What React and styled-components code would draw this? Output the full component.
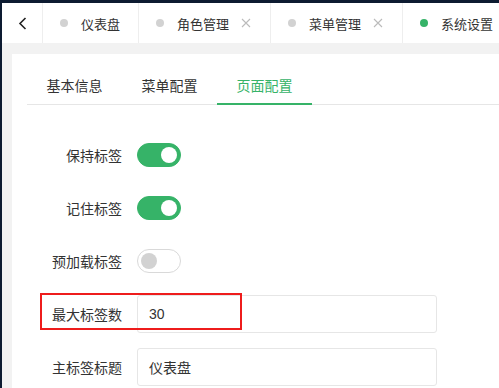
import styled, { createGlobalStyle } from "styled-components"

const GlobalStyle = createGlobalStyle`
  html, body {
    margin: 0;
    padding: 0;
    background: #f2f2f2;
  }
  body {
    font-family: "Liberation Sans", "Noto Sans CJK SC", sans-serif;
    color: #333;
  }
`

const GREEN = "#36b368"

const Frame = styled.div`
  height: 385px;
  border-top: 3px solid #0d1b31;
  border-left: 2px solid #0d1b31;
  background: #f2f2f2;
  overflow: hidden;
  display: flex;
  flex-direction: column;
`

const TabBar = styled.div`
  height: 40px;
  flex: none;
  display: flex;
  background: #fff;
  white-space: nowrap;
`

const BackButton = styled.div`
  width: 40px;
  flex: none;
  display: flex;
  align-items: center;
  justify-content: center;
  border-right: 1px solid #eee;
`

const PageTab = styled.div`
  display: flex;
  align-items: center;
  flex: none;
  padding: 0 ${(p) => (p.$closable ? "19px" : "18px")} 0 17px;
  border-right: 1px solid #eee;
  font-size: 13px;
  color: #333;
  .page-tab__dot {
    width: 8px;
    height: 8px;
    border-radius: 50%;
    background: ${(p) => (p.$active ? GREEN : "#d2d2d2")};
    margin-right: 13px;
  }
  .page-tab__close {
    margin-left: 12px;
    color: #bbb;
    display: flex;
  }
`

const Main = styled.div`
  flex: 1;
  padding: 11px 0 0 10px;
  display: flex;
`

const Card = styled.div`
  flex: 1;
  background: #fff;
  padding: 10px 0 0 15px;
`

const TabNav = styled.div`
  display: flex;
  height: 40px;
  border-bottom: 1px solid #e6e6e6;
  margin-bottom: 31px;
`

const TabItem = styled.div`
  width: 95px;
  display: flex;
  align-items: center;
  justify-content: center;
  font-size: 14px;
  color: ${(p) => (p.$active ? GREEN : "#333")};
  border-bottom: 2px solid ${(p) => (p.$active ? GREEN : "transparent")};
  margin-bottom: -1px;
  box-sizing: border-box;
  padding-top: 2px;
`

const Form = styled.div`
  display: flex;
  flex-direction: column;
  gap: 15px;
`

const Row = styled.div`
  position: relative;
  display: flex;
  align-items: center;
  height: 38px;
`

const Label = styled.div`
  width: 95px;
  padding-right: 15px;
  text-align: right;
  font-size: 14px;
  color: #333;
`

const Switch = styled.div`
  width: 44px;
  height: 24px;
  box-sizing: border-box;
  border-radius: 12px;
  background: ${(p) => (p.$on ? GREEN : "#fff")};
  border: 1px solid ${(p) => (p.$on ? GREEN : "#d9d9d9")};
  display: flex;
  align-items: center;
  justify-content: ${(p) => (p.$on ? "flex-end" : "flex-start")};
  padding: 0 3px;
  &::after {
    content: "";
    width: 16px;
    height: 16px;
    border-radius: 50%;
    background: ${(p) => (p.$on ? "#fff" : "#d2d2d2")};
  }
`

const Input = styled.div`
  width: 300px;
  height: 38px;
  box-sizing: border-box;
  border: 1px solid #e6e6e6;
  border-radius: 3px;
  padding: 0 11px;
  display: flex;
  align-items: center;
  font-size: 14px;
  color: #333;
`

const Highlight = styled.div`
  position: absolute;
  left: 13px;
  top: -2px;
  width: 202px;
  height: 37px;
  box-sizing: border-box;
  border: 2px solid #ee1c1c;
  pointer-events: none;
`

const pageTabs = [
  { title: "仪表盘" },
  { title: "角色管理", closable: true },
  { title: "菜单管理", closable: true },
  { title: "系统设置", active: true },
]

const CloseIcon = () => (
  <svg width="10" height="10" viewBox="0 0 10 10">
    <path d="M1 1 L9 9 M9 1 L1 9" stroke="currentColor" strokeWidth="1.1" fill="none" />
  </svg>
)

const ChevronLeft = () => (
  <svg width="9" height="13" viewBox="0 0 9 13">
    <path d="M7.5 1 L2 6.5 L7.5 12" stroke="#222" strokeWidth="1.6" fill="none" />
  </svg>
)

const App = () => {
  return (
    <>
      <GlobalStyle />
      <Frame>
        <TabBar>
          <BackButton>
            <ChevronLeft />
          </BackButton>
          {pageTabs.map((tab) => (
            <PageTab key={tab.title} $active={tab.active} $closable={tab.closable}>
              <span className="page-tab__dot" />
              <span>{tab.title}</span>
              {tab.closable && (
                <span className="page-tab__close">
                  <CloseIcon />
                </span>
              )}
            </PageTab>
          ))}
        </TabBar>
        <Main>
          <Card>
            <TabNav>
              <TabItem>基本信息</TabItem>
              <TabItem>菜单配置</TabItem>
              <TabItem $active>页面配置</TabItem>
            </TabNav>
            <Form>
              <Row>
                <Label>保持标签</Label>
                <Switch $on />
              </Row>
              <Row>
                <Label>记住标签</Label>
                <Switch $on />
              </Row>
              <Row>
                <Label>预加载标签</Label>
                <Switch />
              </Row>
              <Row>
                <Label>最大标签数</Label>
                <Input>30</Input>
                <Highlight />
              </Row>
              <Row>
                <Label>主标签标题</Label>
                <Input>仪表盘</Input>
              </Row>
            </Form>
          </Card>
        </Main>
      </Frame>
    </>
  )
}

export default App
